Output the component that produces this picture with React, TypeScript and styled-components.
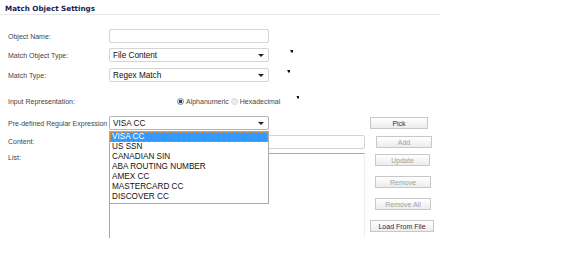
import React from "react";
import styled, { createGlobalStyle } from "styled-components";

const Global = createGlobalStyle`
  html, body { margin: 0; padding: 0; background: #fff; }
  body { font-family: "Liberation Sans", Arial, sans-serif; }
`;

const Page = styled.div`
  width: 576px;
  height: 257px;
  position: relative;
  overflow: hidden;
  background: #fff;
`;

const TitleBar = styled.div`
  width: 440px;
  height: 15px;
  border-bottom: 1px solid #e6e6e6;
  box-sizing: border-box;
  padding: 4px 0 0 5px;
  font-family: "DejaVu Sans", Verdana, sans-serif;
  font-weight: bold;
  font-size: 7.2px;
  color: #1d1d4f;
`;

const Form = styled.div`
  display: flex;
  flex-direction: column;
  padding-left: 8px;
`;

const Row = styled.div<{ $top: number; $h?: number }>`
  display: flex;
  align-items: center;
  margin-top: ${(p) => p.$top}px;
  height: ${(p) => p.$h ?? 14}px;
  position: relative;
`;

const Label = styled.div`
  width: 101px;
  flex: none;
  font-size: 7px;
  color: #454545;
  white-space: nowrap;
`;

const TextBox = styled.div<{ $w: number }>`
  width: ${(p) => p.$w}px;
  height: 14px;
  box-sizing: border-box;
  border: 1px solid #d4d4d4;
  border-radius: 2px;
  background: #fff;
`;

const Select = styled.div<{ $focus?: boolean }>`
  width: 160px;
  height: 14px;
  box-sizing: border-box;
  border: 1px solid ${(p) => (p.$focus ? "#b4b4b4" : "#d4d4d4")};
  border-radius: 2px;
  background: #fff;
  display: flex;
  align-items: center;
  padding: 0 4px 0 3px;
  font-size: 8.2px;
  color: #111;
  position: relative;
`;

const SelectText = styled.span`
  flex: 1;
`;

const Caret = styled.span`
  width: 0;
  height: 0;
  border-left: 3px solid transparent;
  border-right: 3px solid transparent;
  border-top: 3px solid #222;
`;

const Marker = styled.span<{ $ml: number; $dy: number }>`
  display: inline-block;
  width: 3px;
  height: 3px;
  background: #111;
  margin-left: ${(p) => p.$ml}px;
  transform: translateY(${(p) => p.$dy}px);
  clip-path: polygon(0 0, 100% 0, 100% 100%, 40% 100%);
`;

const Radios = styled.div`
  display: flex;
  align-items: center;
  margin-left: 68px;
  font-size: 7px;
  color: #454545;
`;

const Radio = styled.span<{ $on?: boolean }>`
  width: 7px;
  height: 7px;
  border-radius: 50%;
  box-sizing: border-box;
  border: 1px solid ${(p) => (p.$on ? "#7a8a9a" : "#d8d8d8")};
  background: ${(p) =>
    p.$on ? "radial-gradient(circle, #2a4a6a 0 1.6px, #dfe6ee 2px)" : "#eee"};
  margin-right: 2px;
  margin-left: ${(p) => (p.$on ? 0 : 2)}px;
`;

const Lower = styled.div`
  display: flex;
  margin-top: 8px;
`;

const LeftCol = styled.div`
  display: flex;
  flex-direction: column;
  width: 357px;
  flex: none;
  position: relative;
`;

const ListRow = styled.div`
  display: flex;
  margin-top: 5px;
`;

const ListLabel = styled(Label)`
  padding-top: 1px;
  height: 10px;
`;

const ListBox = styled.div`
  width: 256px;
  height: 85px;
  box-sizing: border-box;
  border-top: 1px solid #a8a8a8;
  border-left: 1px solid #a8a8a8;
  border-right: 1px solid #eeeeee;
`;

const Dropdown = styled.div`
  position: absolute;
  left: 101px;
  top: 15px;
  width: 160px;
  box-sizing: border-box;
  border: 1px solid #a8a8a8;
  background: #fff;
  z-index: 2;
  padding-bottom: 1px;
`;

const Option = styled.div<{ $sel?: boolean }>`
  height: 10px;
  line-height: 10px;
  font-size: 8.2px;
  padding-left: 2px;
  color: ${(p) => (p.$sel ? "#fff" : "#111")};
  background: ${(p) => (p.$sel ? "#3399ff" : "transparent")};
  outline: ${(p) => (p.$sel ? "1px dashed #d98a30" : "none")};
  outline-offset: -1px;
  white-space: nowrap;
`;

const ButtonCol = styled.div`
  display: flex;
  flex-direction: column;
  align-items: flex-start;
  padding-top: 1px;
`;

const Button = styled.div<{ $w: number; $ml: number; $mt: number; $on?: boolean }>`
  width: ${(p) => p.$w}px;
  height: 12px;
  margin-left: ${(p) => p.$ml}px;
  margin-top: ${(p) => p.$mt}px;
  box-sizing: border-box;
  border: 1px solid #c8c8c8;
  background: linear-gradient(#ffffff, #ececec);
  font-size: 7px;
  color: ${(p) => (p.$on ? "#2b2b5e" : "#a0a0a0")};
  display: flex;
  align-items: center;
  justify-content: center;
  white-space: nowrap;
`;

const options = [
  "VISA CC",
  "US SSN",
  "CANADIAN SIN",
  "ABA ROUTING NUMBER",
  "AMEX CC",
  "MASTERCARD CC",
  "DISCOVER CC",
];

export default function App() {
  return (
    <Page>
      <Global />
      <TitleBar>Match Object Settings</TitleBar>
      <Form>
        <Row $top={14}>
          <Label>Object Name:</Label>
          <TextBox $w={160} />
        </Row>
        <Row $top={5}>
          <Label>Match Object Type:</Label>
          <Select>
            <SelectText>File Content</SelectText>
            <Caret />
          </Select>
          <Marker $ml={21} $dy={-4} />
        </Row>
        <Row $top={6}>
          <Label>Match Type:</Label>
          <Select>
            <SelectText>Regex Match</SelectText>
            <Caret />
          </Select>
          <Marker $ml={18} $dy={-4} />
        </Row>
        <Row $top={12} $h={14}>
          <Label>Input Representation:</Label>
          <Radios>
            <Radio $on />
            <span>Alphanumeric</span>
            <Radio />
            <span>Hexadecimal</span>
          </Radios>
          <Marker $ml={16} $dy={-4} />
        </Row>
        <Lower>
          <LeftCol>
            <Row $top={0}>
              <Label>Pre-defined Regular Expression</Label>
              <Select $focus>
                <SelectText>VISA CC</SelectText>
                <Caret />
              </Select>
            </Row>
            <Row $top={5} $h={13}>
              <Label>Content:</Label>
              <TextBox $w={256} />
            </Row>
            <ListRow>
              <ListLabel>List:</ListLabel>
              <ListBox />
            </ListRow>
            <Dropdown>
              {options.map((o, i) => (
                <Option key={o} $sel={i === 0}>
                  {o}
                </Option>
              ))}
            </Dropdown>
          </LeftCol>
          <ButtonCol>
            <Button $w={58} $ml={5} $mt={0} $on>Pick</Button>
            <Button $w={56} $ml={11} $mt={7}>Add</Button>
            <Button $w={55} $ml={10} $mt={6}>Update</Button>
            <Button $w={56} $ml={10} $mt={10}>Remove</Button>
            <Button $w={56} $ml={10} $mt={10}>Remove All</Button>
            <Button $w={64} $ml={5} $mt={10} $on>Load From File</Button>
          </ButtonCol>
        </Lower>
      </Form>
    </Page>
  );
}
